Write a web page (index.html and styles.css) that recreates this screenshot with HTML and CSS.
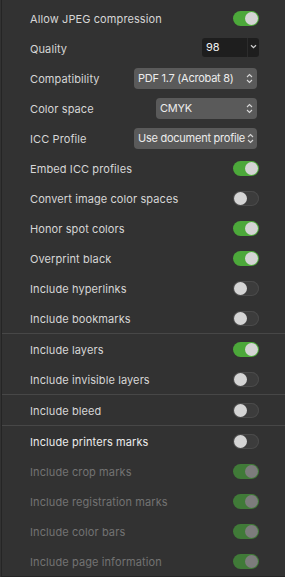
FILE: index.html
```html
<!DOCTYPE html>
<html>
<head>
<meta charset="utf-8">
<link rel="stylesheet" href="styles.css">
</head>
<body>
<div class="panel">
  <div class="group">
    <div class="row"><span class="label">Allow JPEG compression</span><span class="toggle on"></span></div>
    <div class="row"><span class="label">Quality</span>
      <div class="combo"><span class="combo-val">98</span><span class="combo-btn"><svg width="7" height="5" viewBox="0 0 7 5"><path d="M1 1.2 L3.5 3.6 L6 1.2" fill="none" stroke="#cfcfcf" stroke-width="1.3"/></svg></span></div>
    </div>
    <div class="row"><span class="label">Compatibility</span>
      <div class="popup w-wide"><span>PDF 1.7 (Acrobat 8)</span><svg class="updown" width="7" height="11" viewBox="0 0 7 11"><path d="M1 4 L3.5 1.5 L6 4 M1 7 L3.5 9.5 L6 7" fill="none" stroke="#d8d8d8" stroke-width="1.1"/></svg></div>
    </div>
    <div class="row"><span class="label">Color space</span>
      <div class="popup w-mid"><span>CMYK</span><svg class="updown" width="7" height="11" viewBox="0 0 7 11"><path d="M1 4 L3.5 1.5 L6 4 M1 7 L3.5 9.5 L6 7" fill="none" stroke="#d8d8d8" stroke-width="1.1"/></svg></div>
    </div>
    <div class="row"><span class="label">ICC Profile</span>
      <div class="popup w-wide"><span>Use document profile</span><svg class="updown" width="7" height="11" viewBox="0 0 7 11"><path d="M1 4 L3.5 1.5 L6 4 M1 7 L3.5 9.5 L6 7" fill="none" stroke="#d8d8d8" stroke-width="1.1"/></svg></div>
    </div>
    <div class="row"><span class="label">Embed ICC profiles</span><span class="toggle on"></span></div>
    <div class="row"><span class="label">Convert image color spaces</span><span class="toggle"></span></div>
    <div class="row"><span class="label">Honor spot colors</span><span class="toggle on"></span></div>
    <div class="row"><span class="label">Overprint black</span><span class="toggle on"></span></div>
    <div class="row"><span class="label">Include hyperlinks</span><span class="toggle"></span></div>
    <div class="row"><span class="label">Include bookmarks</span><span class="toggle"></span></div>
  </div>
  <div class="group">
    <div class="row"><span class="label">Include layers</span><span class="toggle on"></span></div>
    <div class="row"><span class="label">Include invisible layers</span><span class="toggle"></span></div>
  </div>
  <div class="group">
    <div class="row"><span class="label">Include bleed</span><span class="toggle"></span></div>
  </div>
  <div class="group last">
    <div class="row"><span class="label bright">Include printers marks</span><span class="toggle"></span></div>
    <div class="row disabled"><span class="label">Include crop marks</span><span class="toggle on"></span></div>
    <div class="row disabled"><span class="label">Include registration marks</span><span class="toggle on"></span></div>
    <div class="row disabled"><span class="label">Include color bars</span><span class="toggle on"></span></div>
    <div class="row disabled"><span class="label">Include page information</span><span class="toggle on"></span></div>
  </div>
</div>
</body>
</html>
```
FILE: styles.css
```css
html, body {
  margin: 0;
  padding: 0;
  background: #323232;
}
body {
  width: 285px;
  height: 577px;
  overflow: hidden;
  font-family: Inter, "Noto Sans", sans-serif;
  font-size: 11px;
}
.panel {
  margin-left: 1px;
  border-left: 1px solid #252525;
  border-bottom: 1px solid #252525;
  padding-top: 3px;
  height: 573px;
  box-sizing: content-box;
}
.group {
  border-bottom: 1px solid #474747;
}
.group.last {
  border-bottom: none;
}
.row {
  height: 30px;
  display: flex;
  align-items: center;
  justify-content: space-between;
  padding-left: 28px;
  padding-right: 26px;
}
.label {
  color: #d6d6d6;
  letter-spacing: 0.1px;
  padding-top: 1px;
}
.label.bright {
  color: #ececec;
}
.row.disabled .label {
  color: #727272;
}
.toggle {
  position: relative;
  width: 26px;
  height: 15px;
  border-radius: 8px;
  background: #3c3c3c;
  box-shadow: inset 0 0 0 1px #4a4a4a;
  box-sizing: border-box;
}
.toggle::after {
  content: "";
  position: absolute;
  top: 1px;
  left: 1px;
  width: 13px;
  height: 13px;
  border-radius: 50%;
  background: #d4d4d4;
}
.toggle.on {
  background: #4ca83a;
  box-shadow: none;
}
.toggle.on::after {
  left: 12px;
}
.row.disabled .toggle.on {
  background: #407a38;
}
.row.disabled .toggle::after {
  background: #7c7c7c;
}
.combo {
  display: flex;
  height: 19px;
  width: 57px;
  background: #1e1e1e;
  border-radius: 3px;
  margin-top: -1px;
}
.combo-val {
  flex: 1;
  color: #f0f0f0;
  padding-left: 4px;
  line-height: 19px;
  border-right: 1px solid #2c2c2c;
}
.combo-btn {
  width: 11px;
  display: flex;
  align-items: center;
  justify-content: center;
  padding-bottom: 2px;
}
.popup {
  height: 21px;
  border-radius: 4px;
  background: #5a5a5a;
  color: #ececec;
  display: flex;
  align-items: center;
  justify-content: space-between;
  padding-left: 4px;
  padding-right: 4px;
  box-sizing: border-box;
  margin-right: 2px;
}
.popup span {
  white-space: nowrap;
  letter-spacing: -0.25px;
}
.w-wide { width: 123px; }
.w-mid { width: 101px; }
.updown { flex: none; margin-left: 2px; }
```
